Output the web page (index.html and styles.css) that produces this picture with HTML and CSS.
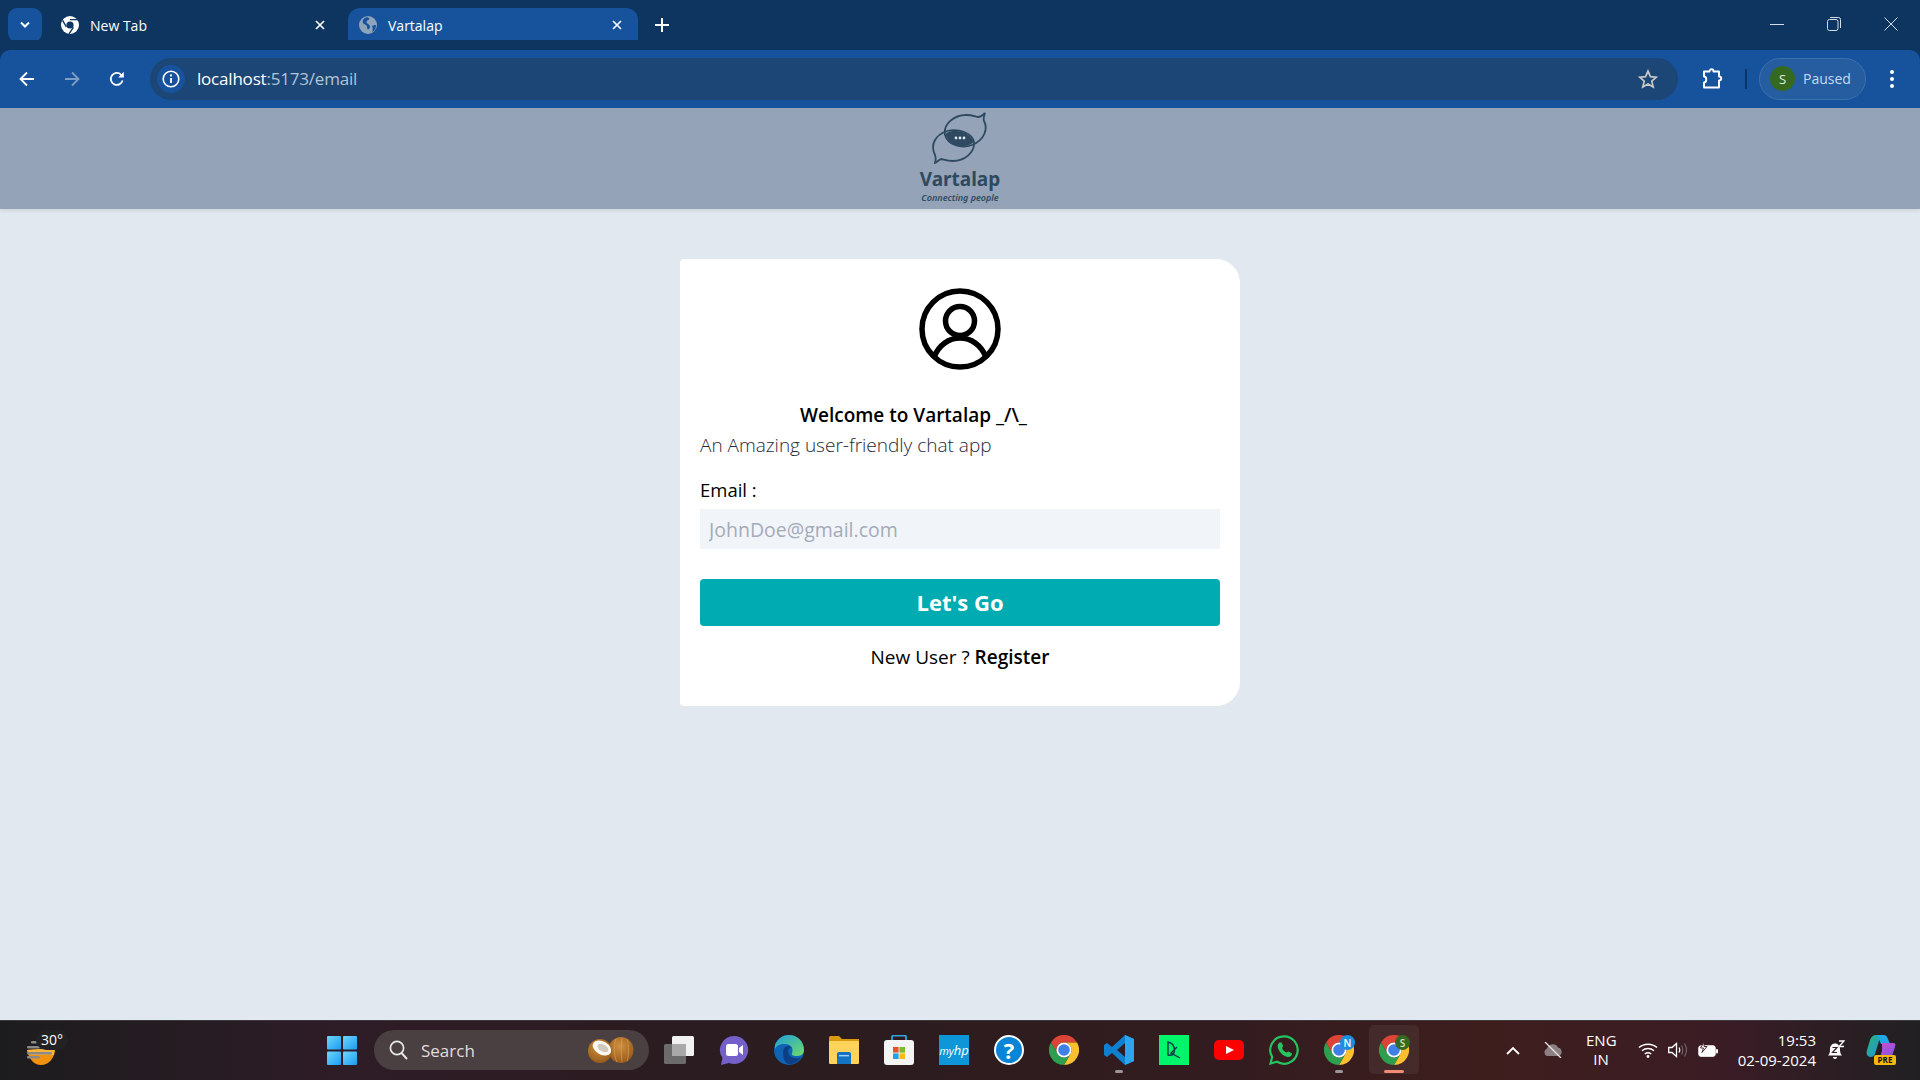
FILE: index.html
```html
<!DOCTYPE html>
<html>
    <head>
        <title>Vartalap</title>
        <link rel="stylesheet" href="styles.css">
    </head>
    <body>
        <svg class="defs" width="0" height="0">
            <symbol id="chrome" viewBox="0 0 30 30">
                <path fill="#db4437" d="M2 7.5A15 15 0 0 1 28 7.5L15 7.5A7.5 7.5 0 0 0 8.5 18.75Z"/>
                <path fill="#fbc02d" d="M28 7.5A15 15 0 0 1 15 30L21.5 18.75A7.5 7.5 0 0 0 15 7.5Z"/>
                <path fill="#2e9e4f" d="M15 30A15 15 0 0 1 2 7.5L8.5 18.75A7.5 7.5 0 0 0 21.5 18.75Z"/>
                <circle cx="15" cy="15" r="7.6" fill="#fff"/>
                <circle cx="15" cy="15" r="5.8" fill="#3f7fe8"/>
            </symbol>
        </svg>

        <!-- browser chrome -->
        <div class="tabstrip">
            <div class="tab-list"><svg width="12" height="8" viewBox="0 0 12 8"><path d="M2 1.5 6 5.5 10 1.5" fill="none" stroke="#fff" stroke-width="2"/></svg></div>
            <div class="tab">
                <svg class="favicon" viewBox="0 0 18 18">
                    <circle cx="9" cy="9" r="9" fill="#fff"/>
                    <circle cx="9" cy="9" r="3.6" fill="#0e3460"/>
                    <path d="M9 3.6H17M5.4 11 1.6 4.4M12.4 11.4 8 17.8" stroke="#0e3460" stroke-width="1.4" fill="none"/>
                </svg>
                <span class="tab-title">New Tab</span>
                <span class="tab-close"><svg width="10" height="10" viewBox="0 0 10 10"><path d="M1 1 9 9M9 1 1 9" stroke="#fff" stroke-width="1.7"/></svg></span>
            </div>
            <div class="tab tab-active">
                <svg class="favicon" viewBox="0 0 18 18">
                    <circle cx="9" cy="9" r="9" fill="#8fa3bb"/>
                    <path d="M8 1C5 2 3 4 4 7c1 2 4 1 4 4 0 2 1 3 2 2 2-2 1-4-1-5C7 7 7 5 9 4c2-1 2-2-1-3ZM13 10c1-1 3-1 4-1 0 3-1 6-4 7 1-2 1-4 0-6Z" fill="#16539c"/>
                </svg>
                <span class="tab-title">Vartalap</span>
                <span class="tab-close"><svg width="10" height="10" viewBox="0 0 10 10"><path d="M1 1 9 9M9 1 1 9" stroke="#fff" stroke-width="1.7"/></svg></span>
            </div>
            <div class="new-tab"><svg width="14" height="14" viewBox="0 0 14 14"><path d="M7 0V14M0 7H14" stroke="#fff" stroke-width="2"/></svg></div>
            <div class="window-controls">
                <svg width="14" height="14" viewBox="0 0 14 14"><path d="M0 7.5H14" stroke="#d5dde8" stroke-width="1"/></svg>
                <svg width="14" height="14" viewBox="0 0 14 14"><rect x=".5" y="2.5" width="10.5" height="11" rx="2" fill="none" stroke="#d5dde8"/><path d="M3 .5H11.5A2 2 0 0 1 13.5 2.5V11" fill="none" stroke="#d5dde8"/></svg>
                <svg width="14" height="14" viewBox="0 0 14 14"><path d="M.5.5 13.5 13.5M13.5.5 .5 13.5" stroke="#d5dde8" stroke-width="1"/></svg>
            </div>
        </div>

        <div class="toolbar">
            <div class="nav-buttons">
                <svg width="16" height="16" viewBox="0 0 16 16"><path d="M15 8H2M8 1.5 1.5 8 8 14.5" fill="none" stroke="#fff" stroke-width="1.8"/></svg>
                <svg width="16" height="16" viewBox="0 0 16 16"><path d="M1 8H14M8 1.5 14.5 8 8 14.5" fill="none" stroke="#7f9cc4" stroke-width="1.8"/></svg>
                <svg width="16" height="16" viewBox="0 0 16 16"><path d="M13.6 9.5A6 6 0 1 1 12 3.6L14 5.6" fill="none" stroke="#fff" stroke-width="1.8"/><path d="M14.8.8V6.4H9.2Z" fill="#fff"/></svg>
            </div>
            <div class="address">
                <span class="site-info"><svg width="18" height="18" viewBox="0 0 18 18"><circle cx="9" cy="9" r="7.8" fill="none" stroke="#fff" stroke-width="1.6"/><path d="M9 8V13" stroke="#fff" stroke-width="1.8"/><circle cx="9" cy="5.4" r="1.1" fill="#fff"/></svg></span>
                <span class="url"><span class="url-host">localhost</span>:5173/email</span>
                <svg class="star" width="20" height="20" viewBox="0 0 20 20"><path d="M10 2 12.4 7.6 18.4 8.1 13.8 12.1 15.2 18 10 14.9 4.8 18 6.2 12.1 1.6 8.1 7.6 7.6Z" fill="none" stroke="#c8c8c8" stroke-width="1.7"/></svg>
            </div>
            <svg class="puzzle" width="22" height="22" viewBox="0 0 22 22"><path d="M3 3.5H8.5C8.5 0.5 12.5 0.5 12.5 3.5H18V8.5C21 8.5 21 12.5 18 12.5V19.5H3V14.5C6 14.5 6 8.5 3 8.5Z" fill="none" stroke="#fff" stroke-width="1.9" stroke-linejoin="round"/></svg>
            <span class="separator"></span>
            <div class="profile">
                <span class="avatar-s">S</span>
                <span class="paused">Paused</span>
            </div>
            <div class="menu-dots"><span></span><span></span><span></span></div>
        </div>

        <!-- the page itself -->
        <header class="app-header">
            <div class="logo">
                <svg width="56" height="52" viewBox="0 0 56 52">
                    <path d="M13.5 22C20 16 36 18 42 30 34 37 17 36 13.5 22Z" fill="#2f4a60"/>
                    <path d="M53 1C52 4 51 6 52 9 56 16 53 28 40 33 29 37 16 33 13 23 11 12 22 3 34 3 41 3 44 5 46 5 49 5 51 3 53 1Z" fill="none" stroke="#2f4a60" stroke-width="1.8"/>
                    <path d="M3 51C4 48 4 46 3 43-2 33 3 23 15 19 27 16 40 21 42 30 43 41 32 49 21 49 14 49 11 47 9 47 7 48 5 50 3 51Z" fill="none" stroke="#2f4a60" stroke-width="1.8"/>
                    <circle cx="24" cy="26" r="1.4" fill="#dfe5ee"/>
                    <circle cx="28" cy="26" r="1.4" fill="#dfe5ee"/>
                    <circle cx="32" cy="26" r="1.4" fill="#dfe5ee"/>
                </svg>
                <span class="logo-name">Vartalap</span>
                <span class="logo-tag">Connecting people</span>
            </div>
        </header>

        <main class="page">
            <section class="card">
                <div class="card-avatar">
                    <svg width="82" height="82" viewBox="0 0 82 82">
                        <circle cx="41" cy="41" r="38" fill="none" stroke="#000" stroke-width="5.5"/>
                        <circle cx="41" cy="33" r="14.5" fill="none" stroke="#000" stroke-width="5.5"/>
                        <path d="M15 69C20 57 30 50 41 50 52 50 62 57 67 69" fill="none" stroke="#000" stroke-width="5.5"/>
                    </svg>
                </div>
                <h3 class="welcome">Welcome to Vartalap _/\_</h3>
                <p class="subtitle">An Amazing user-friendly chat app</p>
                <form class="login-form">
                    <label class="email-label" for="email">Email :</label>
                    <input class="email-input" id="email" type="email" placeholder="JohnDoe@gmail.com">
                    <button class="go-button" type="button">Let's Go</button>
                </form>
                <p class="register-line">New User ? <a class="register-link" href="#">Register</a></p>
            </section>
        </main>

        <!-- windows taskbar -->
        <footer class="taskbar">
            <div class="weather">
                <svg width="30" height="30" viewBox="0 0 30 30">
                    <path d="M1 15 29 13C29 23 23 30 15 30 8 30 3 24 1 15Z" fill="#f0920f"/>
                    <path d="M1 15 29 13 28 20H3Z" fill="#f6b53a"/>
                    <rect x="5" y="6" width="6" height="2.4" rx="1" fill="#8a8a8a"/>
                    <rect x="1" y="11" width="13" height="2.4" rx="1" fill="#8a8a8a"/>
                    <rect x="1" y="17" width="25" height="2.4" rx="1" fill="#8a8a8a"/>
                    <rect x="1" y="21" width="13" height="2.4" rx="1" fill="#8a8a8a"/>
                </svg>
                <span class="temp">30°</span>
            </div>

            <div class="task-center">
                <svg class="win-logo" width="30" height="29" viewBox="0 0 30 29">
                    <defs>
                        <linearGradient id="winBlue" x1="0" y1="0" x2="1" y2="1"><stop offset="0" stop-color="#6fd6fb"/><stop offset="1" stop-color="#1a9cf2"/></linearGradient>
                    </defs>
                    <rect width="14" height="13.5" rx="1" fill="url(#winBlue)"/>
                    <rect x="16" width="14" height="13.5" rx="1" fill="url(#winBlue)"/>
                    <rect y="15.5" width="14" height="13.5" rx="1" fill="url(#winBlue)"/>
                    <rect x="16" y="15.5" width="14" height="13.5" rx="1" fill="url(#winBlue)"/>
                </svg>
                <div class="search-box">
                    <svg width="19" height="20" viewBox="0 0 19 20"><circle cx="8" cy="8" r="6.6" fill="none" stroke="#e8e8e8" stroke-width="1.7"/><path d="M12.6 13 18 19" stroke="#e8e8e8" stroke-width="1.9"/></svg>
                    <span class="search-text">Search</span>
                    <svg class="coconut" width="46" height="26" viewBox="0 0 46 26">
                        <defs>
                            <radialGradient id="husk" cx=".45" cy=".35" r=".75"><stop offset="0" stop-color="#d0913f"/><stop offset="1" stop-color="#8f5216"/></radialGradient>
                        </defs>
                        <ellipse cx="33" cy="13" rx="12.5" ry="13" fill="url(#husk)"/>
                        <path d="M28 2C25 10 26 19 29 25M34 1C33 9 33 18 34 25M39 2C41 9 41 18 39 24" stroke="#dba45a" stroke-width=".6" fill="none"/>
                        <circle cx="12" cy="14" r="12" fill="url(#husk)"/>
                        <ellipse cx="14" cy="11" rx="10" ry="6.5" transform="rotate(30 14 11)" fill="#fbf9f2"/>
                        <ellipse cx="15" cy="11" rx="6" ry="3.5" transform="rotate(30 15 11)" fill="#cfc9be"/>
                    </svg>
                </div>
                <div class="task-icons">
                    <div class="task-icon">
                        <svg width="30" height="28" viewBox="0 0 30 28">
                            <rect x="8" y="0" width="22" height="20" rx="1.5" fill="#f1f1f1"/>
                            <rect x="0" y="8" width="22" height="20" rx="1.5" fill="#6b6b6b"/>
                            <rect x="8" y="8" width="14" height="12" fill="#a9a9a9"/>
                        </svg>
                    </div>
                    <div class="task-icon">
                        <svg width="30" height="30" viewBox="0 0 30 30">
                            <path d="M15 1A14 14 0 1 1 10 28L2 30 3.5 23A14 14 0 0 1 15 1Z" fill="#7460c8"/>
                            <rect x="7" y="9" width="12" height="12" rx="2.5" fill="#fff"/>
                            <path d="M20 13 24 10V20L20 17Z" fill="#fff"/>
                        </svg>
                    </div>
                    <div class="task-icon">
                        <svg width="30" height="30" viewBox="0 0 30 30">
                            <defs>
                                <linearGradient id="edgeGreen" x1="0" y1="0" x2="1" y2="1"><stop offset="0" stop-color="#1f9fd8"/><stop offset="1" stop-color="#6fdc6a"/></linearGradient>
                            </defs>
                            <circle cx="15" cy="15" r="15" fill="#0f63b5"/>
                            <path d="M1 10C4 3 9 0 15 0 24 0 30 7 30 15 30 20 26 21 22 21 19 21 17 20 18 18 20 14 17 9 11 9 6 9 3 10 1 14Z" fill="url(#edgeGreen)"/>
                            <path d="M9 17C9 11 15 9 18 13 14 12 13 17 16 21 19 24 25 24 27 22 24 28 18 30 14 29 10 27 9 22 9 17Z" fill="#0d3f86"/>
                        </svg>
                    </div>
                    <div class="task-icon">
                        <svg width="30" height="28" viewBox="0 0 30 28">
                            <path d="M0 1.5A1.5 1.5 0 0 1 1.5 0H10L13 3H30V10H0Z" fill="#d99b0d"/>
                            <rect y="5" width="30" height="23" rx="1" fill="#fdd35c"/>
                            <path d="M8 18A2 2 0 0 1 10 16H20A2 2 0 0 1 22 18V28H8Z" fill="#1573c4"/>
                            <rect x="10" y="19" width="10" height="1.4" fill="#9fd2f5"/>
                        </svg>
                    </div>
                    <div class="task-icon">
                        <svg width="30" height="30" viewBox="0 0 30 30">
                            <path d="M8 7V2A1.5 1.5 0 0 1 9.5 .5H20.5A1.5 1.5 0 0 1 22 2V7" fill="none" stroke="#2ba6e0" stroke-width="1.8"/>
                            <rect y="5" width="30" height="25" rx="3" fill="#f4f4f4"/>
                            <rect x="9" y="12" width="5.6" height="5.6" fill="#e8532b"/>
                            <rect x="15.4" y="12" width="5.6" height="5.6" fill="#7cb92f"/>
                            <rect x="9" y="18.4" width="5.6" height="5.6" fill="#1fa3e8"/>
                            <rect x="15.4" y="18.4" width="5.6" height="5.6" fill="#fbb912"/>
                        </svg>
                    </div>
                    <div class="task-icon"><span class="myhp">my<b>hp</b></span></div>
                    <div class="task-icon"><span class="help">?</span></div>
                    <div class="task-icon"><svg width="30" height="30"><use href="#chrome"/></svg></div>
                    <div class="task-icon">
                        <svg width="30" height="30" viewBox="0 0 30 30">
                            <path d="M21 0 30 4V26L21 30 8 18 3 22 0 20V10L3 8 8 12ZM21 8 13 15 21 22Z" fill="#0f7fd0"/>
                            <path d="M21 0 30 4V26L21 30Z" fill="#2aa5ee"/>
                        </svg>
                        <span class="pip"></span>
                    </div>
                    <div class="task-icon">
                        <span class="gfg"><svg width="30" height="30" viewBox="0 0 30 30"><path d="M9 7V20C13 21 15.5 19 15.5 15 15.5 11 13 8 9 7ZM18 12 12 18 21 23" fill="none" stroke="#123a4a" stroke-width="1.4"/></svg></span>
                    </div>
                    <div class="task-icon">
                        <svg width="30" height="20" viewBox="0 0 30 20"><rect width="30" height="20" rx="5" fill="#f00"/><path d="M12 6 20 10 12 14Z" fill="#fff"/></svg>
                    </div>
                    <div class="task-icon">
                        <svg width="30" height="30" viewBox="0 0 30 30">
                            <path d="M15 1.3A13.7 13.7 0 1 1 8 26.8L1.5 28.5 3.2 22A13.7 13.7 0 0 1 15 1.3Z" fill="none" stroke="#25c45f" stroke-width="2.2"/>
                            <path d="M10.5 7.5C8.5 9 8 11.5 9.5 14.5 11.5 18.5 14.5 21 18.5 22 21 22.5 23 21 23 18.5L19.5 16.5 17.5 17.5C15.5 16.8 13.8 15 13 13L14.2 11 12.5 7.5Z" fill="#25c45f"/>
                        </svg>
                    </div>
                    <div class="task-icon">
                        <svg width="30" height="30"><use href="#chrome"/></svg>
                        <span class="chrome-badge badge-n">N</span>
                        <span class="pip"></span>
                    </div>
                    <div class="task-icon task-icon-open">
                        <svg width="30" height="30"><use href="#chrome"/></svg>
                        <span class="chrome-badge badge-s">S</span>
                        <span class="pip pip-open"></span>
                    </div>
                </div>
            </div>

            <div class="tray">
                <svg class="tray-chevron" width="14" height="9" viewBox="0 0 14 9"><path d="M1 8 7 2 13 8" fill="none" stroke="#fff" stroke-width="1.8"/></svg>
                <svg class="tray-cloud" width="20" height="16" viewBox="0 0 20 16"><path d="M4 14A4 4 0 0 1 4 6.5 6 6 0 0 1 15 5.5 4.5 4.5 0 0 1 16 14Z" fill="#8d8083"/><path d="M2 0 18 16" stroke="#e8e4e4" stroke-width="1.3"/></svg>
                <div class="lang">ENG<br>IN</div>
                <svg class="tray-wifi" width="20" height="16" viewBox="0 0 20 16"><path d="M1 5.5C6 1 14 1 19 5.5M4 8.8C7.5 5.8 12.5 5.8 16 8.8M6.8 12C8.8 10.5 11.2 10.5 13.2 12" fill="none" stroke="#fff" stroke-width="1.5"/><circle cx="10" cy="14.5" r="1.4" fill="#fff"/></svg>
                <svg class="tray-volume" width="20" height="16" viewBox="0 0 20 16"><path d="M.7 5.5H4L8.5 1.5V14.5L4 10.5H.7Z" fill="none" stroke="#fff" stroke-width="1.3"/><path d="M11 5.5C12 7 12 9 11 10.5" fill="none" stroke="#fff" stroke-width="1.2"/><path d="M13.5 3.5C15.3 6 15.3 10 13.5 12.5M16.5 1.5C19 5.5 19 10.5 16.5 14.5" fill="none" stroke="#6e6468" stroke-width="1.2"/></svg>
                <svg class="tray-battery" width="20" height="16" viewBox="0 0 20 16"><rect x=".8" y="3.8" width="16.4" height="10.5" rx="2" fill="#fff" stroke="#fff"/><rect x="18" y="7" width="2" height="4.5" rx="1" fill="#fff"/><path d="M6 0 2.5 6H5.5L4 10.5 9 4.5H6Z" fill="#fff" stroke="#3a1e22" stroke-width=".9"/></svg>
                <div class="clock"><span>19:53</span><span>02-09-2024</span></div>
                <svg class="tray-bell" width="18" height="20" viewBox="0 0 18 20">
                    <path d="M1 15.5C3 13.5 3 11 3 9 3 5.5 5.5 3.5 8 3.5 10.5 3.5 13 5.5 13 9 13 11 13 13.5 15 15.5Z" fill="#fff"/>
                    <path d="M6 17H10C10 19.5 6 19.5 6 17Z" fill="#fff"/>
                    <path d="M5.5 7.5H10L5.5 12.5H10M12 1H17L12 6.5H17" fill="none" stroke="#3a1e22" stroke-width="1.2"/>
                    <path d="M12 1H17L12 6.5H17" fill="none" stroke="#fff" stroke-width="1.3"/>
                </svg>
                <div class="copilot">
                    <svg width="30" height="24" viewBox="0 0 30 24">
                        <defs>
                            <linearGradient id="copA" x1="0" y1="0" x2="1" y2="1"><stop offset="0" stop-color="#2bb673"/><stop offset="1" stop-color="#1f8fe8"/></linearGradient>
                            <linearGradient id="copB" x1="0" y1="0" x2="1" y2="1"><stop offset="0" stop-color="#d24bd0"/><stop offset="1" stop-color="#7a57e6"/></linearGradient>
                        </defs>
                        <path d="M5 22C1 22 0 19 1 15L4 5C5 2 7 0 10 0H17C15 1 14 3 13 6L9 19C8 21 7 22 5 22Z" fill="url(#copA)"/>
                        <path d="M11 0H18C20 0 21 2 22 4L24 9H15Z" fill="#1fa7ea"/>
                        <path d="M16 8H27C29 8 30 9 29 12L27 18C26 21 25 22 22 22H12C15 21 15 19 16 16Z" fill="url(#copB)"/>
                    </svg>
                    <span class="pre">PRE</span>
                </div>
            </div>
        </footer>
    </body>
</html>
```

FILE: styles.css
```css
* {
    box-sizing: border-box;
}

body {
    margin: 0;
    width: 1920px;
    height: 1080px;
    display: flex;
    flex-direction: column;
    overflow: hidden;
    background-color: #e2e8f0;
    font-family: "Open Sans", "Noto Sans", sans-serif;
}

.defs {
    position: absolute;
}

/* tab strip */
.tabstrip {
    height: 50px;
    display: flex;
    align-items: flex-end;
    background-color: #0e3460;
    color: #fff;
    flex-shrink: 0;
}

.tab-list {
    width: 34px;
    height: 34px;
    margin: 0 0 8px 8px;
    display: flex;
    align-items: center;
    justify-content: center;
    border-radius: 9px;
    background-color: #16539c;
}

.tab {
    width: 300px;
    height: 42px;
    margin-left: 6px;
    padding: 0 23px 8px 13px;
    display: flex;
    align-items: center;
    gap: 11px;
    font-size: 14px;
}

.tab-active {
    width: 290px;
    margin-left: 0;
    padding: 0 16px 8px 11px;
    background-color: #16539c;
    border-radius: 12px 12px 0 0;
}

.favicon {
    width: 18px;
    height: 18px;
    flex-shrink: 0;
}

.tab-title {
    flex: 1;
}

.tab-close {
    display: flex;
}

.new-tab {
    margin: 0 0 18px 17px;
    display: flex;
}

.window-controls {
    margin: 0 22px 19px auto;
    display: flex;
    gap: 43px;
}

/* toolbar */
.toolbar {
    height: 58px;
    display: flex;
    align-items: center;
    flex-shrink: 0;
    background-color: #16539c;
    border-radius: 10px 10px 0 0;
    box-shadow: 0 -10px 0 #0e3460;
    color: #fff;
}

.nav-buttons {
    width: 150px;
    padding-left: 19px;
    display: flex;
    gap: 29px;
}

.address {
    width: 1528px;
    height: 42px;
    padding: 0 20px 0 7px;
    display: flex;
    align-items: center;
    border-radius: 21px;
    background-color: #1b4676;
}

.site-info {
    width: 28px;
    height: 28px;
    display: flex;
    align-items: center;
    justify-content: center;
    border-radius: 50%;
    background-color: #16539c;
}

.url {
    flex: 1;
    margin-left: 12px;
    padding-bottom: 1px;
    font-size: 17px;
    letter-spacing: -0.2px;
    color: #b4c4d8;
}

.url-host {
    color: #fff;
}

.puzzle {
    margin-left: 23px;
}

.separator {
    width: 2px;
    height: 20px;
    margin-left: 22px;
    background-color: #0e3460;
}

.profile {
    width: 107px;
    height: 42px;
    margin-left: 12px;
    padding: 0 0 1px 10px;
    display: flex;
    align-items: center;
    gap: 8px;
    border-radius: 21px;
    border: 1px solid #3c70ae;
    background-color: #265da1;
}

.avatar-s {
    width: 25px;
    height: 25px;
    display: flex;
    align-items: center;
    justify-content: center;
    border-radius: 50%;
    background-color: #35691f;
    font-size: 13px;
    color: #e4efe0;
}

.paused {
    font-size: 14px;
    color: #c9d8ec;
}

.menu-dots {
    margin-left: 24px;
    display: flex;
    flex-direction: column;
    gap: 3px;
}

.menu-dots span {
    width: 4px;
    height: 4px;
    border-radius: 50%;
    background-color: #fff;
}

/* app */
.app-header {
    height: 101px;
    display: flex;
    justify-content: center;
    flex-shrink: 0;
    background-color: #94a3b8;
    box-shadow: 0 2px 3px rgba(0, 0, 0, 0.08);
}

.logo {
    display: flex;
    flex-direction: column;
    align-items: center;
    padding-top: 4px;
    color: #2f4a60;
}

.logo-name {
    margin-top: 3px;
    font-family: "Noto Sans", sans-serif;
    font-size: 19px;
    line-height: 24px;
    font-weight: 700;
}

.logo-tag {
    font-family: "Noto Sans", sans-serif;
    font-size: 9px;
    line-height: 14px;
    font-weight: 600;
    font-style: italic;
}

.page {
    flex: 1;
    display: flex;
    justify-content: center;
    padding-top: 50px;
}

.card {
    width: 560px;
    height: 447px;
    padding: 29px 20px 0;
    background-color: #fff;
    border-radius: 4px 24px 24px 4px;
}

.card-avatar {
    display: flex;
    justify-content: center;
    height: 81px;
}

.welcome {
    margin: 32px 0 0 100px;
    font-size: 19px;
    line-height: 28px;
    font-weight: 600;
    color: #000;
}

.subtitle {
    margin: 2px 0 0;
    font-size: 19px;
    line-height: 28px;
    font-weight: 300;
    color: #1f2937;
}

.login-form {
    margin-top: 17px;
    display: flex;
    flex-direction: column;
}

.email-label {
    font-size: 18.5px;
    line-height: 28px;
    color: #000;
}

.email-input {
    height: 40px;
    margin-top: 5px;
    padding: 0 9px;
    border: none;
    outline: none;
    background-color: #f1f5f9;
    font-family: inherit;
    font-size: 19.5px;
}

.email-input::placeholder {
    color: #a4abb8;
}

.go-button {
    height: 47px;
    margin-top: 30px;
    padding: 0 0 2px;
    border: none;
    border-radius: 4px;
    background-color: #00acb2;
    color: #fff;
    font-family: inherit;
    font-size: 22px;
    font-weight: 700;
}

.register-line {
    margin: 17px 0 0;
    text-align: center;
    font-size: 19px;
    line-height: 28px;
    color: #000;
}

.register-link {
    font-weight: 600;
    color: #000;
    text-decoration: none;
}

/* taskbar */
.taskbar {
    height: 60px;
    flex-shrink: 0;
    display: flex;
    align-items: center;
    box-shadow: inset 0 1px 0 #3c3a3c;
    background: linear-gradient(90deg, #1c1c1e 0%, #2e1c26 18%, #2a1c1f 40%, #331c1f 65%, #3e1e1d 78%, #3a1c25 90%, #202022 100%);
    color: #fff;
}

.weather {
    width: 327px;
    padding-left: 26px;
    height: 100%;
    display: flex;
    align-items: center;
    position: relative;
}

.temp {
    position: absolute;
    left: 36px;
    top: 10px;
    padding: 0 5px;
    border-radius: 12px;
    background-color: #222124;
    font-size: 14px;
    line-height: 20px;
}

.task-center {
    display: flex;
    align-items: center;
}

.search-box {
    width: 275px;
    height: 40px;
    margin-left: 17px;
    padding: 0 15px;
    display: flex;
    align-items: center;
    gap: 13px;
    border-radius: 20px;
    background-color: #4a4041;
}

.search-text {
    flex: 1;
    font-size: 17px;
    color: #e0dcdc;
}

.task-icons {
    margin-left: 15px;
    display: flex;
    gap: 25px;
}

.task-icon {
    width: 30px;
    height: 30px;
    display: flex;
    align-items: center;
    justify-content: center;
    position: relative;
}

.task-icon-open::before {
    content: "";
    position: absolute;
    left: -10px;
    top: -10px;
    width: 50px;
    height: 49px;
    border-radius: 5px;
    background-color: rgba(255, 255, 255, 0.06);
}

.task-icon svg {
    position: relative;
}

.pip {
    position: absolute;
    left: 11px;
    bottom: -8px;
    width: 8px;
    height: 3px;
    border-radius: 2px;
    background-color: #9b9698;
}

.pip-open {
    left: 5px;
    width: 20px;
    background-color: #f08a72;
}

.chrome-badge {
    position: absolute;
    right: -1px;
    top: 0;
    width: 15px;
    height: 15px;
    display: flex;
    align-items: center;
    justify-content: center;
    border-radius: 50%;
    font-size: 10px;
    font-weight: 600;
}

.badge-n {
    background-color: #1c8ee0;
}

.badge-s {
    background-color: #35691f;
    color: #d5e5cc;
}

.myhp {
    width: 30px;
    height: 30px;
    display: flex;
    align-items: center;
    justify-content: center;
    background-color: #0e96d8;
    font-size: 11px;
    font-style: italic;
}

.myhp b {
    font-weight: 400;
    font-size: 13px;
}

.help {
    width: 30px;
    height: 30px;
    display: flex;
    align-items: center;
    justify-content: center;
    border-radius: 50%;
    border: 2px solid #fff;
    background-color: #0a84d6;
    font-size: 22px;
    font-weight: 700;
}

.gfg {
    width: 30px;
    height: 30px;
    display: block;
    background-color: #00f56a;
}

.tray {
    margin-left: 97px;
    display: flex;
    align-items: center;
}

.tray-cloud {
    margin-left: 23px;
}

.lang {
    width: 30px;
    margin-left: 23px;
    text-align: center;
    font-size: 15px;
    line-height: 19px;
}

.tray-wifi {
    margin-left: 22px;
}

.tray-volume,
.tray-battery {
    margin-left: 10px;
}

.clock {
    width: 98px;
    display: flex;
    flex-direction: column;
    align-items: flex-end;
    font-size: 15px;
    line-height: 20px;
}

.tray-bell {
    margin-left: 11px;
}

.copilot {
    margin-left: 21px;
    width: 30px;
    height: 30px;
    position: relative;
}

.pre {
    position: absolute;
    right: 0;
    bottom: 0;
    width: 22px;
    height: 10px;
    border-radius: 2px;
    background-color: #f5b80e;
    color: #111;
    text-align: center;
    font-size: 8px;
    line-height: 10px;
    font-weight: 700;
}
```
